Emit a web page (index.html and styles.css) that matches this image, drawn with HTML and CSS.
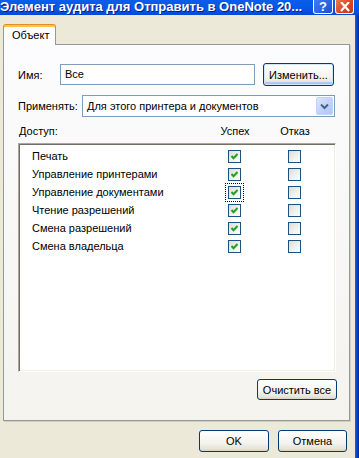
FILE: index.html
```html
<!DOCTYPE html>
<html>
<head>
<meta charset="utf-8">
<link rel="stylesheet" href="styles.css">
</head>
<body>
<div class="titlebar">
  <span class="title">Элемент аудита для Отправить в OneNote 20...</span>
  <div class="tb-buttons">
    <span class="tb-btn help">?</span>
    <span class="tb-btn close"><svg width="12" height="10" viewBox="0 0 12 10"><path d="M2 0 L10 9 M10 0 L2 9" stroke="#fff" stroke-width="2.2" fill="none"/></svg></span>
  </div>
</div>
<div class="frame">
  <div class="client">
    <div class="tabs"><div class="tab">Объект</div></div>
    <div class="panel">
      <div class="row name-row">
        <span class="lbl lbl-name">Имя:</span>
        <div class="input">Все</div>
        <button class="btn btn-change">Изменить...</button>
      </div>
      <div class="row apply-row">
        <span class="lbl lbl-apply">Применять:</span>
        <div class="select">
          <span class="select-text">Для этого принтера и документов</span>
          <span class="dd"><svg width="9" height="7" viewBox="0 0 9 7"><path d="M1 1.5 L4.5 5 L8 1.5" stroke="#4d6185" stroke-width="2" fill="none"/></svg></span>
        </div>
      </div>
      <div class="head">
        <span>Доступ:</span>
        <span class="c">Успех</span>
        <span class="c">Отказ</span>
      </div>
      <div class="listbox">
        <div class="lrow"><span>Печать</span><span class="cb on"><svg width="11" height="11" viewBox="0 0 11 11"><path d="M2.5 5 L4.5 7.2 L8.5 3" stroke="#21a121" stroke-width="2" fill="none"/></svg></span><span class="cb"></span></div>
        <div class="lrow"><span>Управление принтерами</span><span class="cb on"><svg width="11" height="11" viewBox="0 0 11 11"><path d="M2.5 5 L4.5 7.2 L8.5 3" stroke="#21a121" stroke-width="2" fill="none"/></svg></span><span class="cb"></span></div>
        <div class="lrow"><span>Управление документами</span><span class="cb on focus"><svg width="11" height="11" viewBox="0 0 11 11"><path d="M2.5 5 L4.5 7.2 L8.5 3" stroke="#21a121" stroke-width="2" fill="none"/></svg></span><span class="cb"></span></div>
        <div class="lrow"><span>Чтение разрешений</span><span class="cb on"><svg width="11" height="11" viewBox="0 0 11 11"><path d="M2.5 5 L4.5 7.2 L8.5 3" stroke="#21a121" stroke-width="2" fill="none"/></svg></span><span class="cb"></span></div>
        <div class="lrow"><span>Смена разрешений</span><span class="cb on"><svg width="11" height="11" viewBox="0 0 11 11"><path d="M2.5 5 L4.5 7.2 L8.5 3" stroke="#21a121" stroke-width="2" fill="none"/></svg></span><span class="cb"></span></div>
        <div class="lrow"><span>Смена владельца</span><span class="cb on"><svg width="11" height="11" viewBox="0 0 11 11"><path d="M2.5 5 L4.5 7.2 L8.5 3" stroke="#21a121" stroke-width="2" fill="none"/></svg></span><span class="cb"></span></div>
      </div>
      <div class="clear-row"><button class="btn btn-clear">Очистить все</button></div>
    </div>
    <div class="dlg-buttons">
      <button class="btn btn-ok">OK</button>
      <button class="btn btn-cancel">Отмена</button>
    </div>
  </div>
  <div class="frame-right"></div>
</div>
</body>
</html>
```

FILE: styles.css
```css
* { box-sizing: border-box; }
html, body { margin: 0; padding: 0; }
body {
  width: 359px;
  height: 458px;
  overflow: hidden;
  background: #ece9d8;
  font-family: "Liberation Sans", Arial, sans-serif;
  font-size: 11px;
  color: #000;
}
.titlebar {
  height: 15px;
  display: flex;
  align-items: flex-start;
  justify-content: space-between;
  padding-right: 5px;
  background: linear-gradient(#0a5ee9, #0656e4 60%, #0349d8);
}
.title {
  color: #fff;
  font-weight: bold;
  font-size: 13px;
  line-height: 13px;
  white-space: nowrap;
  text-shadow: 1px 1px 0 #0a1a8a;
}
.tb-buttons { display: flex; gap: 2px; }
.tb-btn {
  width: 20px;
  height: 14px;
  border: 1px solid #fff;
  border-top: none;
  border-radius: 0 0 3px 3px;
  display: flex;
  align-items: center;
  justify-content: center;
  color: #fff;
  font-weight: bold;
  font-size: 13px;
  line-height: 13px;
}
.help { background: linear-gradient(135deg, #3d7cf5, #2663e6 60%, #1c4fd0); }
.close { width: 19px; background: linear-gradient(135deg, #e8774f, #d8451f 60%, #c2381a); }
.frame {
  display: flex;
  height: 443px;
}
.client {
  width: 355px;
  padding: 10px 0 0 3px;
  display: flex;
  flex-direction: column;
}
.frame-right {
  width: 4px;
  background: linear-gradient(to right, #1a63e6, #0747d6 40%, #0437c4 75%, #00209a);
}
.tabs { display: flex; height: 19px; }
.tab {
  width: 53px;
  height: 20px;
  position: relative;
  z-index: 1;
  background: #fcfcfe;
  border: 1px solid #919b9c;
  border-bottom: none;
  border-top: 2px solid #ffc83c;
  border-radius: 3px 3px 0 0;
  box-shadow: 0 -1px 0 #e68b2c;
  padding: 1px 0 0 8px;
  line-height: 14px;
}
.panel {
  width: 347px;
  height: 377px;
  border: 1px solid #919b9c;
  border-right-color: #919b9c;
  background: linear-gradient(#fcfcfe, #f4f3ee);
  box-shadow: 1px 1px 0 #d0cec1;
  padding: 18px 12px 0 14px;
  display: flex;
  flex-direction: column;
}
.row { display: flex; align-items: center; }
.name-row { height: 23px; }
.lbl { white-space: nowrap; }
.lbl-name { width: 42px; }
.lbl-apply { width: 64px; }
.input {
  width: 195px;
  height: 21px;
  border: 1px solid #7f9db9;
  background: #fff;
  padding-left: 4px;
  line-height: 19px;
}
.btn {
  font-family: "Liberation Sans", Arial, sans-serif;
  font-size: 11px;
  color: #000;
  border: 1px solid #003c74;
  border-radius: 3px;
  background: linear-gradient(#ffffff, #f4f3ee 60%, #e6e3d6 90%, #d6d0c5);
  padding: 0;
  margin: 0;
}
.btn-change {
  margin-left: 8px;
  width: 71px;
  height: 23px;
  box-shadow: inset 0 0 0 1px #cee7ff, inset 0 -2px 0 1px #adc6f4;
}
.apply-row { margin-top: 9px; height: 22px; }
.select {
  width: 253px;
  height: 22px;
  border: 1px solid #7f9db9;
  background: #fff;
  display: flex;
  align-items: center;
  justify-content: space-between;
  padding: 0 1px 0 4px;
}
.dd {
  width: 17px;
  height: 18px;
  border: 1px solid #c3d3fd;
  border-radius: 2px;
  background: linear-gradient(135deg, #dde7fd, #c1d3fb 50%, #b1c6f7);
  display: flex;
  align-items: center;
  justify-content: center;
}
.head {
  margin-top: 7px;
  height: 15px;
  line-height: 15px;
  display: grid;
  grid-template-columns: 186px 60px 60px;
  padding-left: 1px;
  margin-bottom: 4px;
}
.head .c { text-align: center; }
.listbox {
  width: 318px;
  height: 229px;
  background: #fff;
  border: 1px solid;
  border-color: #aca899 #fff #fff #aca899;
  box-shadow: inset 1px 1px 0 #716f64, inset -1px -1px 0 #f1efe2;
  padding: 3px 0 0 13px;
}
.lrow {
  display: grid;
  grid-template-columns: 173px 60px 60px;
  height: 18px;
  align-items: center;
}
.cb {
  margin-left: 23px;
  width: 13px;
  height: 13px;
  border: 1px solid #1c5180;
  background: linear-gradient(135deg, #dcdcd7, #f6f6f3 70%, #fff);
  display: flex;
}
.cb.focus { outline: 1px dotted #000; outline-offset: 2px; }
.clear-row { display: flex; justify-content: flex-end; margin-top: 7px; }
.btn-clear { width: 80px; height: 21px; }
.dlg-buttons {
  display: flex;
  justify-content: flex-end;
  gap: 9px;
  margin-top: 9px;
  padding-right: 8px;
}
.btn-ok { width: 70px; height: 22px; }
.btn-cancel { width: 69px; height: 22px; }
```
